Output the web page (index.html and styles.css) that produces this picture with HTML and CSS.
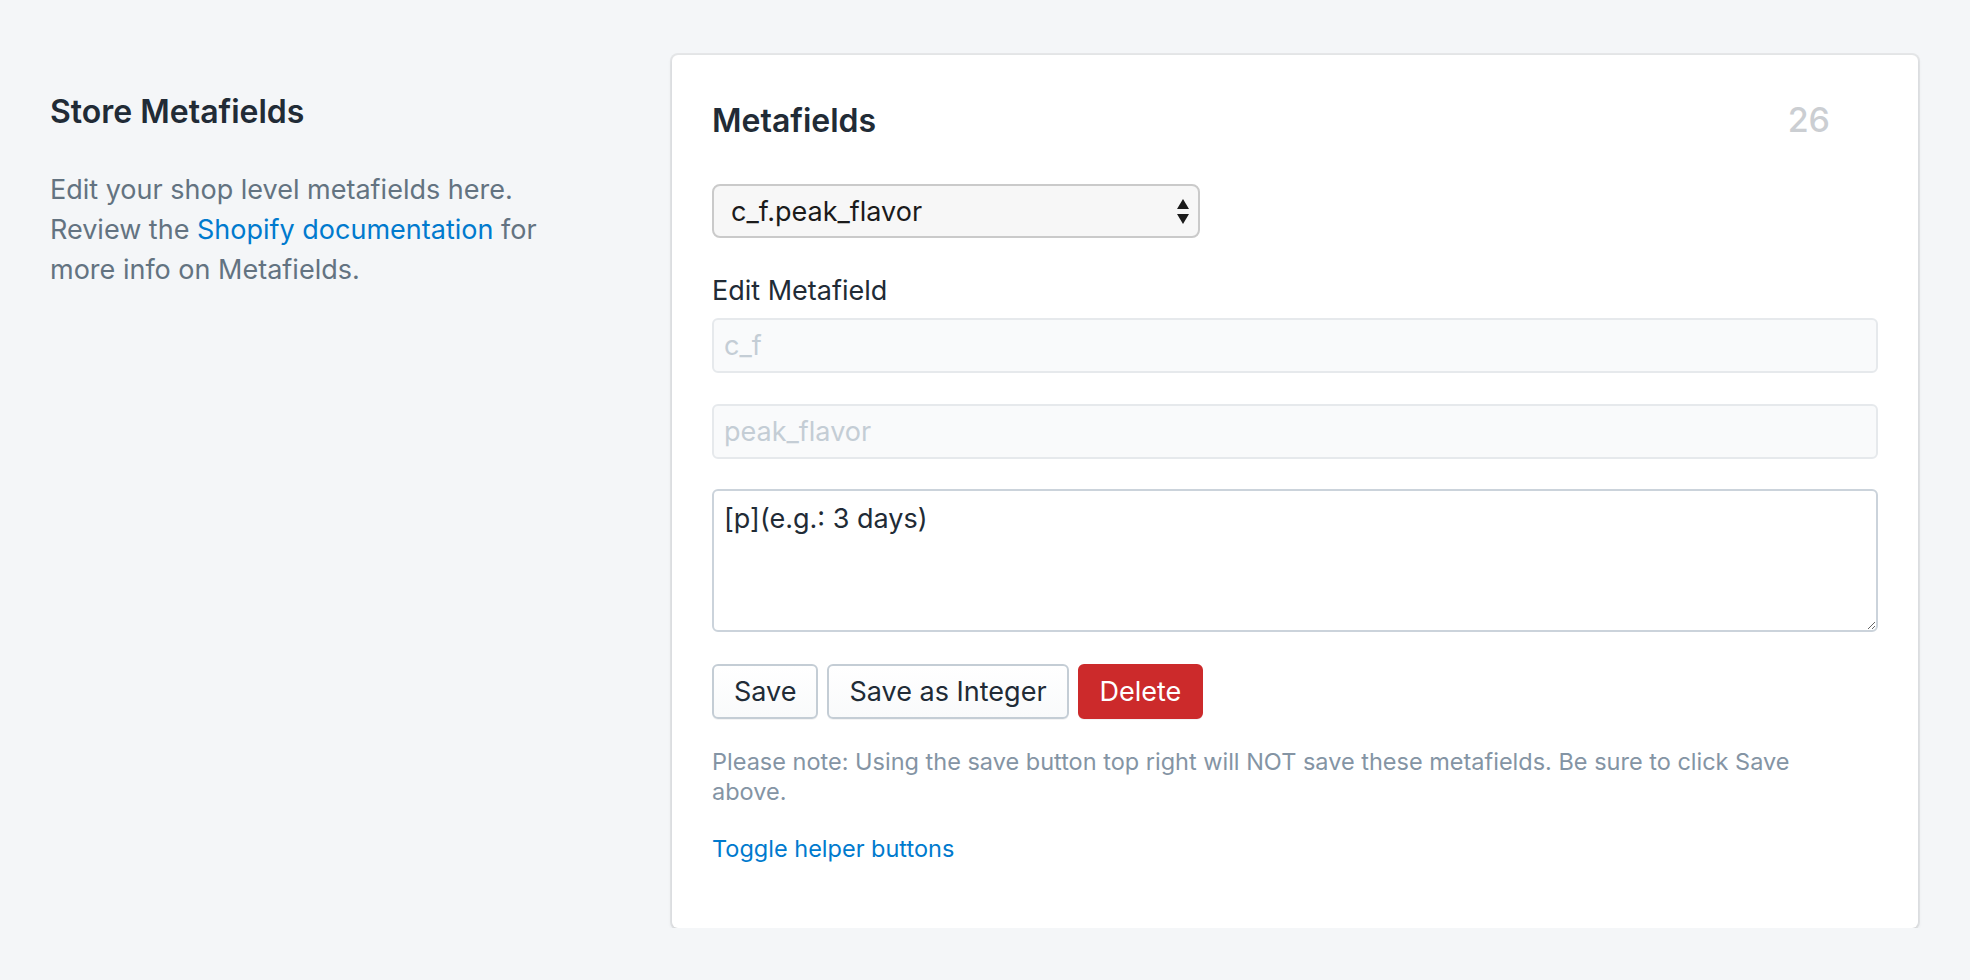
FILE: index.html
```html
<!DOCTYPE html>
<html lang="en">
<head>
<meta charset="utf-8">
<title>Store Metafields</title>
<link rel="stylesheet" href="styles.css">
</head>
<body>
<div class="page">
  <section class="annotation">
    <h2 class="annotation-title">Store Metafields</h2>
    <p class="annotation-desc">Edit your shop level metafields here. Review the <a class="link" href="#">Shopify documentation</a> for more info on Metafields.</p>
  </section>
  <section class="card">
    <div class="card-header">
      <h2 class="card-title">Metafields</h2>
      <span class="count">26</span>
    </div>
    <div class="select-wrap">
      <select class="select"><option>c_f.peak_flavor</option></select>
      <svg class="select-arrows" width="12" height="26" viewBox="0 0 12 26" aria-hidden="true">
        <polygon points="6,0 12,10 0,10" fill="#1b1b1b"/>
        <polygon points="0,15 12,15 6,25" fill="#1b1b1b"/>
      </svg>
    </div>
    <label class="field-label">Edit Metafield</label>
    <input class="input" type="text" readonly value="c_f">
    <input class="input input-second" type="text" readonly value="peak_flavor">
    <textarea class="textarea">[p](e.g.: 3 days)</textarea>
    <div class="actions">
      <button class="btn">Save</button>
      <button class="btn">Save as Integer</button>
      <button class="btn btn-destructive">Delete</button>
    </div>
    <p class="note">Please note: Using the save button top right will NOT save these metafields. Be sure to click Save above.</p>
    <a class="toggle" href="#">Toggle helper buttons</a>
  </section>
</div>
</body>
</html>
```
FILE: styles.css
```css
* { box-sizing: border-box; }

html, body {
  margin: 0;
  background: #f4f6f8;
}

body {
  font-family: "Inter", "Liberation Sans", sans-serif;
  color: #212b36;
}

.page {
  display: flex;
  align-items: flex-start;
  gap: 102px;
  padding: 55px 52px 0 50px;
}

.annotation {
  flex: 0 0 520px;
  padding-top: 37px;
}

.annotation-title {
  margin: 0;
  font-size: 32px;
  line-height: 40px;
  font-weight: 600;
  color: #212b36;
}

.annotation-desc {
  margin: 38px 0 0;
  font-size: 27px;
  line-height: 40px;
  color: #637381;
}

.link {
  color: #007ace;
  text-decoration: none;
}

.card {
  flex: 1;
  background: #fff;
  border-radius: 6px;
  box-shadow: 0 0 0 2px rgba(63, 63, 68, 0.08), 0 2px 4px rgba(63, 63, 68, 0.14);
  padding: 45px 40px 64px;
  display: flex;
  flex-direction: column;
  align-items: flex-start;
}

.card-header {
  align-self: stretch;
  display: flex;
  justify-content: space-between;
  align-items: baseline;
  height: 40px;
}

.card-title {
  margin: 0;
  font-size: 32px;
  line-height: 40px;
  font-weight: 600;
  color: #212b36;
}

.count {
  margin-right: 48px;
  font-size: 34px;
  line-height: 40px;
  font-weight: 500;
  color: #cbced2;
}

.select-wrap {
  position: relative;
  margin-top: 44px;
}

.select {
  appearance: none;
  -webkit-appearance: none;
  display: block;
  width: 488px;
  height: 54px;
  margin: 0;
  padding: 0 40px 0 17px;
  border: 2px solid #cacaca;
  border-radius: 8px;
  background: #f7f7f7;
  font-family: inherit;
  font-size: 27px;
  color: #1b1b1b;
}

.select-arrows {
  position: absolute;
  right: 11px;
  top: 15px;
}

.field-label {
  margin-top: 33px;
  font-size: 27px;
  line-height: 40px;
  color: #212b36;
}

.input {
  align-self: stretch;
  height: 55px;
  margin: 7px 0 0;
  padding: 0 10px;
  border: 2px solid #e6e9ec;
  border-radius: 6px;
  background: #f9fafb;
  font-family: inherit;
  font-size: 27px;
  color: #c4cdd5;
  outline: none;
}

.input-second {
  margin-top: 31px;
}

.textarea {
  align-self: stretch;
  height: 143px;
  margin: 30px 0 0;
  padding: 10px 10px;
  border: 2px solid #cbd3db;
  border-radius: 6px;
  background: #fff;
  font-family: inherit;
  font-size: 27px;
  line-height: 36px;
  color: #212b36;
  outline: none;
}

.actions {
  display: flex;
  gap: 9px;
  margin-top: 32px;
}

.btn {
  height: 55px;
  padding: 0 20px;
  border: 2px solid #c4cdd5;
  border-radius: 6px;
  background: linear-gradient(180deg, #ffffff, #f9fafb);
  box-shadow: 0 1px 0 rgba(22, 29, 37, 0.05);
  font-family: inherit;
  font-size: 27px;
  color: #212b36;
}

.btn-destructive {
  background: #cc2a2b;
  border-color: #cc2a2b;
  color: #fff;
}

.note {
  max-width: 1130px;
  margin: 28px 0 0;
  font-size: 23.5px;
  line-height: 30px;
  color: #8494a4;
}

.toggle {
  margin-top: 27px;
  font-size: 23.5px;
  line-height: 30px;
  color: #007ace;
  text-decoration: none;
}
```
